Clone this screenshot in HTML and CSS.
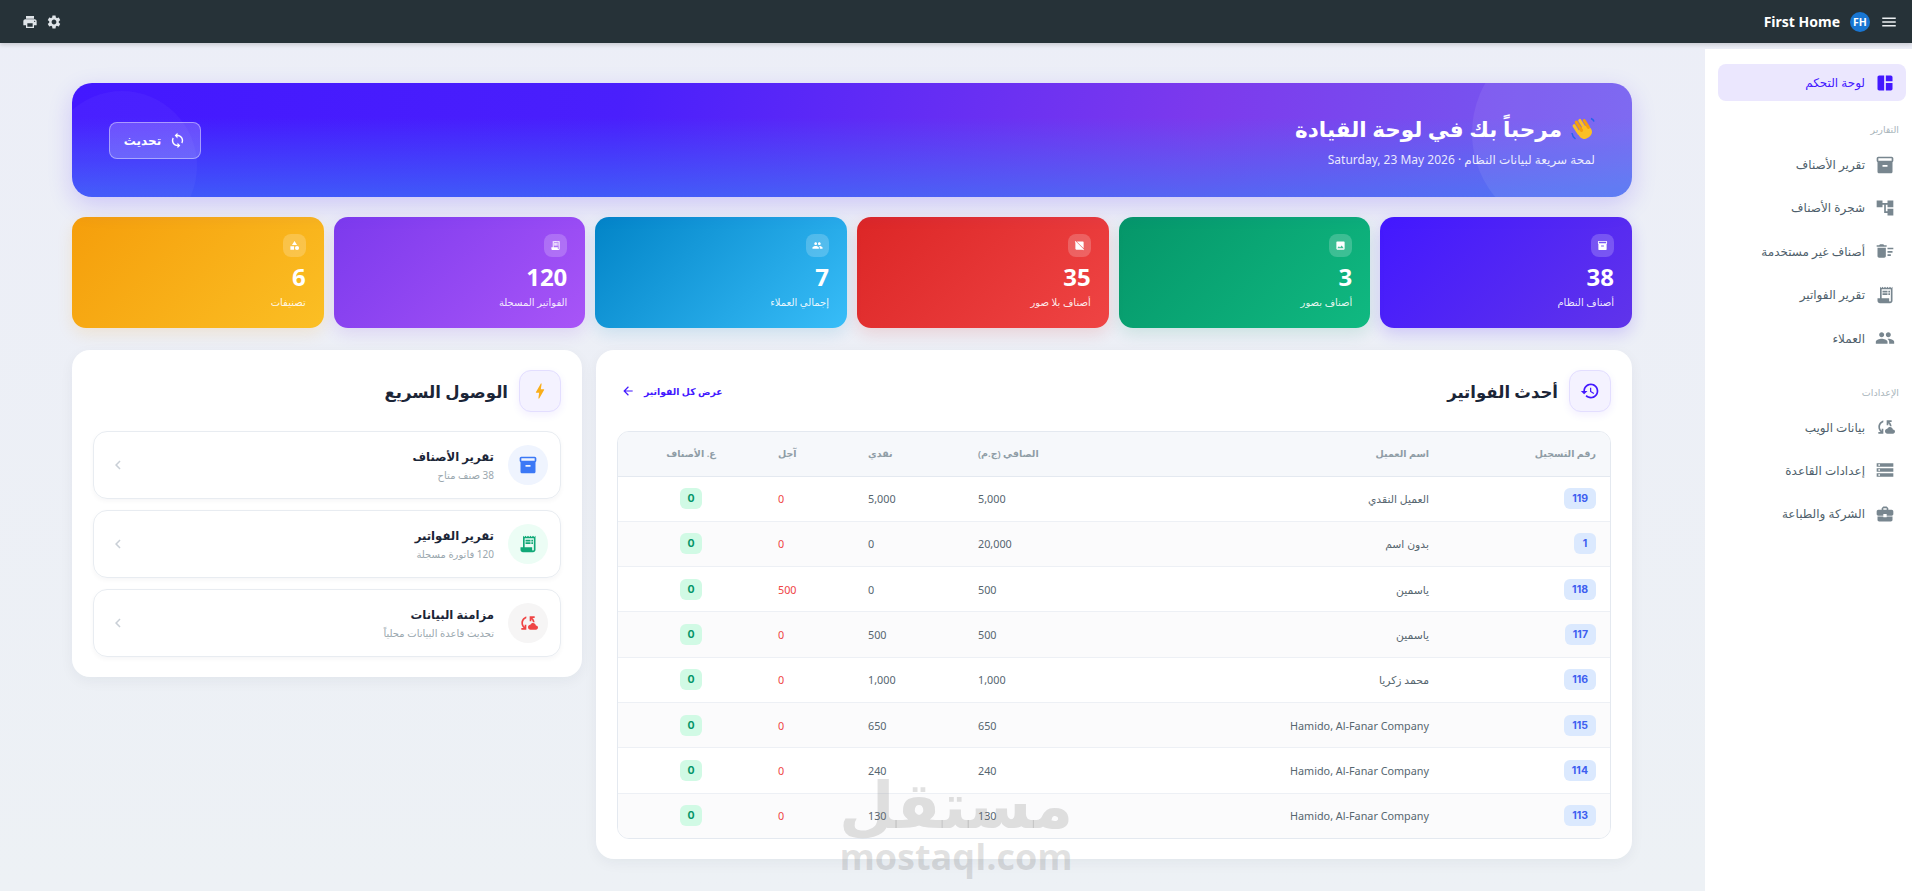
FILE: index.html
```html
<!DOCTYPE html>
<html lang="ar" dir="rtl">
<head>
    <meta charset="UTF-8">
    <meta name="viewport" content="width=device-width, initial-scale=1.0">
    <title>لوحة التحكم</title>
    <link rel="stylesheet" href="styles.css">
</head>
<body>
    <!-- icon set -->
    <svg class="icon-defs" xmlns="http://www.w3.org/2000/svg">
        <symbol id="i-dashboard" viewBox="0 0 24 24"><path d="M11 21H5c-1.1 0-2-.9-2-2V5c0-1.1.9-2 2-2h6v18zm2 0h6c1.1 0 2-.9 2-2v-7h-8v9zm8-11V5c0-1.1-.9-2-2-2h-6v7h8z"/></symbol>
        <symbol id="i-box" viewBox="0 0 24 24"><path d="M20 2H4c-1 0-2 .9-2 2v3.01c0 .72.43 1.34 1 1.69V20c0 1.1 1.1 2 2 2h14c.9 0 2-.9 2-2V8.7c.57-.35 1-.97 1-1.69V4c0-1.1-1-2-2-2zm-5 12H9v-2h6v2zm5-7H4V4l16-.02V7z"/></symbol>
        <symbol id="i-tree" viewBox="0 0 24 24"><path d="M22 11V3h-7v3H9V3H2v8h7V8h2v10h4v3h7v-8h-7v3h-2V8h2v3z"/></symbol>
        <symbol id="i-sweep" viewBox="0 0 24 24"><path d="M15 16h4v2h-4zm0-8h7v2h-7zm0 4h6v2h-6zM3 18c0 1.1.9 2 2 2h6c1.1 0 2-.9 2-2V8H3v10zM14 5h-3l-1-1H6L5 5H2v2h12z"/></symbol>
        <symbol id="i-receipt" viewBox="0 0 24 24"><path d="M19.5 3.5L18 2l-1.5 1.5L15 2l-1.5 1.5L12 2l-1.5 1.5L9 2 7.5 3.5 6 2v14H3v3c0 1.66 1.34 3 3 3h12c1.66 0 3-1.34 3-3V2l-1.5 1.5zM19 19c0 .55-.45 1-1 1s-1-.45-1-1v-3H8V5h11v14zM9 7h6v2H9zm7 0h2v2h-2zM9 10h6v2H9zm7 0h2v2h-2z"/></symbol>
        <symbol id="i-people" viewBox="0 0 24 24"><path d="M16 11c1.66 0 2.99-1.34 2.99-3S17.66 5 16 5c-1.66 0-3 1.34-3 3s1.34 3 3 3zm-8 0c1.66 0 2.99-1.34 2.99-3S9.66 5 8 5C6.34 5 5 6.34 5 8s1.34 3 3 3zm0 2c-2.33 0-7 1.17-7 3.5V19h14v-2.5c0-2.33-4.67-3.5-7-3.5zm8 0c-.29 0-.62.02-.97.05 1.16.84 1.97 1.97 1.97 3.45V19h6v-2.5c0-2.33-4.67-3.5-7-3.5z"/></symbol>
        <symbol id="i-cloud" viewBox="0 0 24 24"><path d="M21.5 14.98c-.02 0-.03 0-.05.01C21.2 13.3 19.76 12 18 12c-1.4 0-2.6.83-3.16 2.02C13.26 14.1 12 15.4 12 17c0 1.66 1.34 3 3 3l6.5-.02c1.38 0 2.5-1.12 2.5-2.5s-1.12-2.5-2.5-2.5zM10 4.26v2.09C7.67 7.18 6 9.39 6 12c0 1.77.78 3.34 2 4.44V14h2v6H4v-2h2.73C5.06 16.54 4 14.4 4 12c0-3.73 2.55-6.85 6-7.74zM20 6h-2.73c1.43 1.26 2.41 3.01 2.66 5h-2.02c-.23-1.36-.93-2.55-1.91-3.44V10h-2V4h6v2z"/></symbol>
        <symbol id="i-storage" viewBox="0 0 24 24"><path d="M2 20h20v-4H2v4zm2-3h2v2H4v-2zM2 4v4h20V4H2zm4 3H4V5h2v2zm-4 7h20v-4H2v4zm2-3h2v2H4v-2z"/></symbol>
        <symbol id="i-case" viewBox="0 0 24 24"><path d="M10 16v-1H3.01L3 19c0 1.11.89 2 2 2h14c1.11 0 2-.89 2-2v-4h-7v1h-4zm10-9h-4.01V5l-2-2h-4l-2 2v2H4c-1.1 0-2 .9-2 2v3c0 1.11.89 2 2 2h6v-2h4v2h6c1.1 0 2-.9 2-2V9c0-1.1-.9-2-2-2zm-6 0h-4V5h4v2z"/></symbol>
        <symbol id="i-menu" viewBox="0 0 24 24"><path d="M3 18h18v-2H3v2zm0-5h18v-2H3v2zm0-7v2h18V6H3z"/></symbol>
        <symbol id="i-print" viewBox="0 0 24 24"><path d="M19 8H5c-1.66 0-3 1.34-3 3v6h4v4h12v-4h4v-6c0-1.66-1.34-3-3-3zm-3 11H8v-5h8v5zm3-7c-.55 0-1-.45-1-1s.45-1 1-1 1 .45 1 1-.45 1-1 1zm-1-9H6v4h12V3z"/></symbol>
        <symbol id="i-gear" viewBox="0 0 24 24"><path d="M19.14 12.94c.04-.3.06-.61.06-.94 0-.32-.02-.64-.07-.94l2.03-1.58c.18-.14.23-.41.12-.61l-1.92-3.32c-.12-.22-.37-.29-.59-.22l-2.39.96c-.5-.38-1.03-.7-1.62-.94l-.36-2.54c-.04-.24-.24-.41-.48-.41h-3.84c-.24 0-.43.17-.47.41l-.36 2.54c-.59.24-1.13.57-1.62.94l-2.39-.96c-.22-.08-.47 0-.59.22L2.74 8.87c-.12.21-.08.47.12.61l2.03 1.58c-.05.3-.09.63-.09.94s.02.64.07.94l-2.03 1.58c-.18.14-.23.41-.12.61l1.92 3.32c.12.22.37.29.59.22l2.39-.96c.5.38 1.03.7 1.62.94l.36 2.54c.05.24.24.41.48.41h3.84c.24 0 .44-.17.47-.41l.36-2.54c.59-.24 1.13-.56 1.62-.94l2.39.96c.22.08.47 0 .59-.22l1.92-3.32c.12-.22.07-.47-.12-.61l-2.01-1.58zM12 15.6c-1.98 0-3.6-1.62-3.6-3.6s1.62-3.6 3.6-3.6 3.6 1.62 3.6 3.6-1.62 3.6-3.6 3.6z"/></symbol>
        <symbol id="i-sync" viewBox="0 0 24 24"><path d="M12 4V1L8 5l4 4V6c3.31 0 6 2.69 6 6 0 1.01-.25 1.97-.7 2.8l1.46 1.46C19.54 15.03 20 13.57 20 12c0-4.42-3.58-8-8-8zm0 14c-3.31 0-6-2.69-6-6 0-1.01.25-1.97.7-2.8L5.24 7.74C4.46 8.97 4 10.43 4 12c0 4.42 3.58 8 8 8v3l4-4-4-4v3z"/></symbol>
        <symbol id="i-image" viewBox="0 0 24 24"><path d="M21 19V5c0-1.1-.9-2-2-2H5c-1.1 0-2 .9-2 2v14c0 1.1.9 2 2 2h14c1.1 0 2-.9 2-2zM8.5 13.5l2.5 3.01L14.5 12l4.5 6H5l3.5-4.5z"/></symbol>
        <symbol id="i-noimage" viewBox="0 0 24 24"><path d="M21 18.15V5c0-1.1-.9-2-2-2H5.85L21 18.15zM20.31 22.14 18.17 21H5c-1.1 0-2-.9-2-2V5.83L1.86 3.69 3.27 2.28l18.45 18.45-1.41 1.41z"/></symbol>
        <symbol id="i-category" viewBox="0 0 24 24"><path d="M12 2l-5.5 9h11zM17.5 13a4.5 4.5 0 1 0 0 9 4.5 4.5 0 0 0 0-9zM3 13.5h8v8H3z"/></symbol>
        <symbol id="i-bolt" viewBox="0 0 24 24"><path d="M11 21h-1l1-7H7.5c-.58 0-.57-.32-.38-.66.19-.34.05-.08.07-.12C8.48 10.94 10.42 7.54 13 3h1l-1 7h3.5c.49 0 .56.33.47.51l-.07.15C12.96 17.55 11 21 11 21z"/></symbol>
        <symbol id="i-history" viewBox="0 0 24 24"><path d="M13 3c-4.97 0-9 4.03-9 9H1l3.89 3.89.07.14L9 12H6c0-3.87 3.13-7 7-7s7 3.13 7 7-3.13 7-7 7c-1.93 0-3.68-.79-4.94-2.06l-1.42 1.42C8.27 19.99 10.51 21 13 21c4.97 0 9-4.03 9-9s-4.03-9-9-9zm-1 5v5l4.28 2.54.72-1.21-3.5-2.08V8H12z"/></symbol>
        <symbol id="i-back" viewBox="0 0 24 24"><path d="M20 11H7.83l5.59-5.59L12 4l-8 8 8 8 1.41-1.41L7.83 13H20v-2z"/></symbol>
        <symbol id="i-chevron" viewBox="0 0 24 24"><path d="M15.41 7.41L14 6l-6 6 6 6 1.41-1.41L10.83 12z"/></symbol>
    </svg>

    <header class="topbar">
        <div class="topbar-brand">
            <button class="icon-btn"><svg class="icon-md"><use href="#i-menu"/></svg></button>
            <span class="avatar">FH</span>
            <span class="brand-name">First Home</span>
        </div>
        <div class="topbar-tools">
            <svg class="icon-tool"><use href="#i-gear"/></svg>
            <svg class="icon-tool"><use href="#i-print"/></svg>
        </div>
    </header>

    <div class="layout">
        <aside class="sidebar">
            <a class="nav-item active"><svg class="nav-icon"><use href="#i-dashboard"/></svg>لوحة التحكم</a>

            <div class="nav-label">التقارير</div>
            <a class="nav-item"><svg class="nav-icon"><use href="#i-box"/></svg>تقرير الأصناف</a>
            <a class="nav-item"><svg class="nav-icon"><use href="#i-tree"/></svg>شجرة الأصناف</a>
            <a class="nav-item"><svg class="nav-icon"><use href="#i-sweep"/></svg>أصناف غير مستخدمة</a>
            <a class="nav-item"><svg class="nav-icon"><use href="#i-receipt"/></svg>تقرير الفواتير</a>
            <a class="nav-item"><svg class="nav-icon"><use href="#i-people"/></svg>العملاء</a>

            <div class="nav-label nav-label-gap">الإعدادات</div>
            <a class="nav-item"><svg class="nav-icon"><use href="#i-cloud"/></svg>بيانات الويب</a>
            <a class="nav-item"><svg class="nav-icon"><use href="#i-storage"/></svg>إعدادات القاعدة</a>
            <a class="nav-item"><svg class="nav-icon"><use href="#i-case"/></svg>الشركة والطباعة</a>
        </aside>

        <main class="main">
            <section class="banner">
                <div class="banner-text">
                    <h1>
                        <svg class="wave" viewBox="0 0 24 24">
                            <g transform="rotate(-32 12 12)">
                                <rect x="5" y="10" width="14" height="12" rx="6" fill="#fbbf24"/>
                                <rect x="4.6" y="3" width="3.2" height="12" rx="1.6" fill="#fbbf24"/>
                                <rect x="8.4" y="1" width="3.2" height="13" rx="1.6" fill="#f59e0b"/>
                                <rect x="12.2" y="1.5" width="3.2" height="13" rx="1.6" fill="#fbbf24"/>
                                <rect x="16" y="4" width="3" height="11" rx="1.5" fill="#f59e0b"/>
                            </g>
                            <path d="M1 16c.3 2.5 1.5 4.5 3.5 6M20 1.5c1.5.5 2.5 1.5 3 3" fill="none" stroke="#2563eb" stroke-width="1.5"/>
                        </svg>
                        مرحباً بك في لوحة القيادة
                    </h1>
                    <p>لمحة سريعة لبيانات النظام · <span class="latin">Saturday, 23 May 2026</span></p>
                </div>
                <button class="refresh-btn"><svg class="icon-sm"><use href="#i-sync"/></svg>تحديث</button>
            </section>

            <section class="stats">
                <div class="stat stat-indigo">
                    <span class="stat-icon"><svg><use href="#i-box"/></svg></span>
                    <strong>38</strong>
                    <span class="stat-label">أصناف النظام</span>
                </div>
                <div class="stat stat-green">
                    <span class="stat-icon"><svg><use href="#i-image"/></svg></span>
                    <strong>3</strong>
                    <span class="stat-label">أصناف بصور</span>
                </div>
                <div class="stat stat-red">
                    <span class="stat-icon"><svg><use href="#i-noimage"/></svg></span>
                    <strong>35</strong>
                    <span class="stat-label">أصناف بلا صور</span>
                </div>
                <div class="stat stat-blue">
                    <span class="stat-icon"><svg><use href="#i-people"/></svg></span>
                    <strong>7</strong>
                    <span class="stat-label">إجمالي العملاء</span>
                </div>
                <div class="stat stat-purple">
                    <span class="stat-icon"><svg><use href="#i-receipt"/></svg></span>
                    <strong>120</strong>
                    <span class="stat-label">الفواتير المسجلة</span>
                </div>
                <div class="stat stat-amber">
                    <span class="stat-icon"><svg><use href="#i-category"/></svg></span>
                    <strong>6</strong>
                    <span class="stat-label">تصنيفات</span>
                </div>
            </section>

            <section class="columns">
                <div class="panel">
                    <div class="panel-head">
                        <div class="panel-title">
                            <span class="panel-icon icon-indigo"><svg><use href="#i-history"/></svg></span>
                            <h2>أحدث الفواتير</h2>
                        </div>
                        <a class="panel-link">عرض كل الفواتير<svg class="icon-xs"><use href="#i-back"/></svg></a>
                    </div>
                    <div class="table-wrap">
                        <table class="invoices">
                            <thead>
                                <tr>
                                    <th class="col-id">رقم التسجيل</th>
                                    <th class="col-name">اسم العميل</th>
                                    <th class="col-net num">الصافي (ج.م)</th>
                                    <th class="col-cash num">نقدي</th>
                                    <th class="col-due num">آجل</th>
                                    <th class="col-items">ع. الأصناف</th>
                                </tr>
                            </thead>
                            <tbody>
                                <tr><td><span class="badge">119</span></td><td>العميل النقدي</td><td class="num">5,000</td><td class="num">5,000</td><td class="num due">0</td><td class="col-items"><span class="badge-green">0</span></td></tr>
                                <tr><td><span class="badge">1</span></td><td>بدون اسم</td><td class="num">20,000</td><td class="num">0</td><td class="num due">0</td><td class="col-items"><span class="badge-green">0</span></td></tr>
                                <tr><td><span class="badge">118</span></td><td>ياسمين</td><td class="num">500</td><td class="num">0</td><td class="num due">500</td><td class="col-items"><span class="badge-green">0</span></td></tr>
                                <tr><td><span class="badge">117</span></td><td>ياسمين</td><td class="num">500</td><td class="num">500</td><td class="num due">0</td><td class="col-items"><span class="badge-green">0</span></td></tr>
                                <tr><td><span class="badge">116</span></td><td>محمد زكريا</td><td class="num">1,000</td><td class="num">1,000</td><td class="num due">0</td><td class="col-items"><span class="badge-green">0</span></td></tr>
                                <tr><td><span class="badge">115</span></td><td>Hamido, Al-Fanar Company</td><td class="num">650</td><td class="num">650</td><td class="num due">0</td><td class="col-items"><span class="badge-green">0</span></td></tr>
                                <tr><td><span class="badge">114</span></td><td>Hamido, Al-Fanar Company</td><td class="num">240</td><td class="num">240</td><td class="num due">0</td><td class="col-items"><span class="badge-green">0</span></td></tr>
                                <tr><td><span class="badge">113</span></td><td>Hamido, Al-Fanar Company</td><td class="num">130</td><td class="num">130</td><td class="num due">0</td><td class="col-items"><span class="badge-green">0</span></td></tr>
                            </tbody>
                        </table>
                    </div>
                </div>

                <div class="panel panel-side">
                    <div class="panel-head">
                        <div class="panel-title">
                            <span class="panel-icon icon-amber"><svg><use href="#i-bolt"/></svg></span>
                            <h2>الوصول السريع</h2>
                        </div>
                    </div>
                    <div class="quick-list">
                        <a class="quick-item">
                            <span class="quick-icon quick-blue"><svg><use href="#i-box"/></svg></span>
                            <span class="quick-text"><b>تقرير الأصناف</b><small>38 صنف متاح</small></span>
                            <svg class="quick-arrow"><use href="#i-chevron"/></svg>
                        </a>
                        <a class="quick-item">
                            <span class="quick-icon quick-green"><svg><use href="#i-receipt"/></svg></span>
                            <span class="quick-text"><b>تقرير الفواتير</b><small>120 فاتورة مسجلة</small></span>
                            <svg class="quick-arrow"><use href="#i-chevron"/></svg>
                        </a>
                        <a class="quick-item">
                            <span class="quick-icon quick-red"><svg><use href="#i-cloud"/></svg></span>
                            <span class="quick-text"><b>مزامنة البيانات</b><small>تحديث قاعدة البيانات محلياً</small></span>
                            <svg class="quick-arrow"><use href="#i-chevron"/></svg>
                        </a>
                    </div>
                </div>
            </section>
        </main>
    </div>

    <div class="watermark">
        <span class="wm-ar">مستقل</span>
        <span class="wm-en">mostaql.com</span>
    </div>
</body>
</html>
```

FILE: styles.css
```css
* {
    box-sizing: border-box;
}
html, body {
    height: 100%;
}
body {
    margin: 0;
    font-family: "Noto Sans", "DejaVu Sans", sans-serif;
    background: linear-gradient(180deg, #eceef7, #edf1f5);
    color: #1b2537;
    overflow: hidden;
}
h1, h2, p {
    margin: 0;
}
svg {
    fill: currentColor;
    display: block;
}
.icon-defs {
    display: none;
}
.icon-md {
    width: 18px;
    height: 18px;
}
.icon-sm {
    width: 17px;
    height: 17px;
}
.icon-xs {
    width: 14px;
    height: 14px;
}
.icon-tool {
    width: 16px;
    height: 16px;
}
.latin {
    direction: ltr;
    unicode-bidi: isolate;
}

/* top bar */
.topbar {
    height: 43px;
    background-color: #263238;
    color: #eceff1;
    display: flex;
    align-items: center;
    justify-content: space-between;
    padding: 0 14px 0 22px;
    box-shadow: 0 2px 4px rgba(0, 0, 0, 0.15);
    position: relative;
}
.topbar-brand {
    display: flex;
    align-items: center;
    gap: 10px;
}
.icon-btn {
    background: none;
    border: none;
    padding: 0;
    color: inherit;
}
.avatar {
    width: 20px;
    height: 20px;
    border-radius: 50%;
    background-color: #1976d2;
    color: #fff;
    font-size: 10.5px;
    font-weight: 700;
    display: flex;
    align-items: center;
    justify-content: center;
}
.brand-name {
    font-size: 14px;
    font-weight: 700;
    color: #fff;
}
.topbar-tools {
    display: flex;
    gap: 8px;
    color: #dfe4e8;
}

/* sidebar */
.layout {
    display: flex;
    height: calc(100% - 43px);
}
.sidebar {
    width: 207px;
    flex-shrink: 0;
    background-color: #fff;
    margin-top: 6px;
    padding: 15px 6px 0 13px;
}
.nav-item {
    display: flex;
    align-items: center;
    gap: 10px;
    height: 37px;
    margin-bottom: 6.4px;
    padding: 0 11px 0 0;
    border-radius: 8px;
    font-size: 12px;
    color: #4f5f6c;
}
.nav-icon {
    width: 20px;
    height: 20px;
    color: #78868f;
}
.nav-item.active {
    background-color: #ebe7fe;
    color: #4318ff;
}
.nav-item.active .nav-icon {
    color: #4318ff;
}
.nav-label {
    font-size: 9.5px;
    color: #a9b5bb;
    padding: 0 7px 0 0;
    margin: 22px 0 10px;
}
.nav-label-gap {
    margin-top: 29px;
}

/* main */
.main {
    flex: 1;
    min-width: 0;
    padding: 40px 73px 0 72px;
}
.banner {
    height: 114px;
    border-radius: 20px;
    padding: 0 37px;
    display: flex;
    align-items: center;
    justify-content: space-between;
    color: #fff;
    position: relative;
    overflow: hidden;
    background:
        linear-gradient(to bottom, rgba(59, 130, 246, 0) 30%, rgba(59, 130, 246, 0.6) 100%),
        linear-gradient(100deg, #4318ff 0%, #4a1ffc 35%, #7c3aed 72%, #7560f0 100%);
    box-shadow: 0 8px 24px rgba(67, 24, 255, 0.18);
}
.banner::before {
    content: "";
    position: absolute;
    width: 200px;
    height: 200px;
    right: -40px;
    top: -50px;
    border-radius: 50%;
    background-color: rgba(255, 255, 255, 0.07);
}
.banner::after {
    content: "";
    position: absolute;
    width: 150px;
    height: 150px;
    left: -25px;
    top: 8px;
    border-radius: 50%;
    background-color: rgba(255, 255, 255, 0.035);
}
.banner-text, .refresh-btn {
    position: relative;
    z-index: 1;
}
.banner h1 {
    display: flex;
    align-items: center;
    gap: 9px;
    font-size: 21.5px;
    font-weight: 700;
    line-height: 32px;
}
.wave {
    width: 24px;
    height: 24px;
}
.banner p {
    font-size: 12px;
    color: rgba(255, 255, 255, 0.88);
    margin-top: 6px;
}
.refresh-btn {
    width: 92px;
    height: 37px;
    display: flex;
    align-items: center;
    justify-content: center;
    gap: 8px;
    background-color: rgba(255, 255, 255, 0.2);
    border: 1px solid rgba(255, 255, 255, 0.42);
    border-radius: 8px;
    color: #fff;
    font-family: inherit;
    font-size: 12px;
    font-weight: 600;
}

/* stat cards */
.stats {
    display: grid;
    grid-template-columns: repeat(6, 1fr);
    gap: 10px;
    margin-top: 20px;
}
.stat {
    height: 111px;
    border-radius: 14px;
    padding: 17px 18px 0;
    color: #fff;
    display: flex;
    flex-direction: column;
    align-items: flex-start;
}
.stat strong {
    font-size: 24px;
    font-weight: 700;
    line-height: 30px;
    margin-top: 5px;
}
.stat-label {
    font-size: 10px;
    line-height: 16px;
    color: rgba(255, 255, 255, 0.9);
    margin-top: 2px;
}
.stat-icon {
    width: 23px;
    height: 23px;
    border-radius: 8px;
    background-color: rgba(255, 255, 255, 0.2);
    display: flex;
    align-items: center;
    justify-content: center;
}
.stat-icon svg {
    width: 11px;
    height: 11px;
}
.stat-indigo {
    background: linear-gradient(135deg, #4318ff, #6034ea);
    box-shadow: 0 6px 16px rgba(67, 24, 255, 0.18);
}
.stat-green {
    background: linear-gradient(135deg, #059669, #10b981);
    box-shadow: 0 6px 16px rgba(5, 150, 105, 0.14);
}
.stat-red {
    background: linear-gradient(135deg, #dc2626, #ef4444);
    box-shadow: 0 6px 16px rgba(220, 38, 38, 0.14);
}
.stat-blue {
    background: linear-gradient(135deg, #0284c7, #38bdf8);
    box-shadow: 0 6px 16px rgba(2, 132, 199, 0.14);
}
.stat-purple {
    background: linear-gradient(135deg, #7c3aed, #a855f7);
    box-shadow: 0 6px 16px rgba(124, 58, 237, 0.14);
}
.stat-amber {
    background: linear-gradient(135deg, #f59e0b, #fbbf24);
    box-shadow: 0 6px 16px rgba(245, 158, 11, 0.14);
}

/* panels */
.columns {
    display: grid;
    grid-template-columns: 1036px 510px;
    gap: 14px;
    align-items: start;
    margin-top: 22px;
}
.panel {
    background-color: #fff;
    border-radius: 18px;
    padding: 20px 21px 20px;
    box-shadow: 0 4px 14px rgba(27, 37, 55, 0.05);
}
.panel-head {
    display: flex;
    align-items: center;
    justify-content: space-between;
    height: 42px;
    margin-bottom: 19px;
}
.panel-title {
    display: flex;
    align-items: center;
    gap: 11px;
}
.panel h2 {
    font-size: 16.5px;
    font-weight: 700;
}
.panel-icon {
    width: 42px;
    height: 42px;
    border-radius: 12px;
    background-color: #f4f2ff;
    border: 1px solid #e3deff;
    box-shadow: 0 3px 8px rgba(67, 24, 255, 0.07);
    display: flex;
    align-items: center;
    justify-content: center;
}
.panel-icon svg {
    width: 20px;
    height: 20px;
}
.icon-indigo {
    color: #4318ff;
}
.icon-amber {
    color: #f9ae1a;
}
.panel-link {
    display: flex;
    align-items: center;
    gap: 9px;
    font-size: 9.3px;
    font-weight: 600;
    color: #4318ff;
    padding-left: 4px;
}

/* invoices table */
.table-wrap {
    border: 1px solid #e4e9f0;
    border-radius: 12px;
    overflow: hidden;
}
.invoices {
    width: 100%;
    border-collapse: collapse;
    table-layout: fixed;
}
.invoices th {
    height: 44px;
    background-color: #f6f8fb;
    border-bottom: 1px solid #e4e9f0;
    font-size: 9.5px;
    font-weight: 600;
    color: #8f9da6;
    text-align: right;
    padding: 0 14px;
}
.invoices td {
    height: 45.3px;
    font-size: 10.8px;
    color: #56666f;
    padding: 0 14px;
    border-bottom: 1px solid #edf0f5;
}
.invoices tr:last-child td {
    border-bottom: none;
}
.invoices tbody tr:nth-child(even) {
    background-color: #fbfbfc;
}
.col-id {
    width: 167px;
}
.col-net {
    width: 130px;
}
.col-cash {
    width: 110px;
}
.col-due {
    width: 90px;
}
.col-items {
    width: 146px;
    text-align: center !important;
}
.invoices .num {
    text-align: left;
}
.invoices .due {
    color: #ef4444;
}
.badge {
    display: inline-block;
    min-width: 22px;
    padding: 4px 8px;
    border-radius: 6px;
    background-color: #dbe9fe;
    color: #3f5ff0;
    font-family: Inter, sans-serif;
    font-size: 10.5px;
    font-weight: 700;
    text-align: center;
}
.badge-green {
    display: inline-block;
    width: 22px;
    padding: 4px 0;
    border-radius: 6px;
    background-color: #d1fae5;
    color: #059669;
    font-family: Inter, sans-serif;
    font-size: 10.5px;
    font-weight: 700;
    text-align: center;
}

/* quick access */
.quick-list {
    display: flex;
    flex-direction: column;
    gap: 11px;
}
.quick-item {
    display: flex;
    align-items: center;
    gap: 14px;
    height: 68px;
    padding: 0 12px;
    border: 1px solid #e8ecf1;
    border-radius: 14px;
    box-shadow: 0 2px 5px rgba(27, 37, 55, 0.04);
}
.quick-icon {
    width: 40px;
    height: 40px;
    border-radius: 50%;
    display: flex;
    align-items: center;
    justify-content: center;
}
.quick-icon svg {
    width: 20px;
    height: 20px;
}
.quick-blue {
    background-color: #eff4fe;
    color: #3b78f6;
}
.quick-green {
    background-color: #ecfdf5;
    color: #10a877;
}
.quick-red {
    background-color: #f6f5f5;
    color: #ef4444;
}
.quick-text {
    flex: 1;
    display: flex;
    flex-direction: column;
    gap: 4px;
}
.quick-text b {
    font-size: 11.7px;
    font-weight: 700;
    color: #1b2537;
}
.quick-text small {
    font-size: 10px;
    color: #9aa7ae;
}
.quick-arrow {
    width: 18px;
    height: 18px;
    color: #c9cfd6;
    margin-left: 3px;
}

/* watermark over the page */
.watermark {
    position: absolute;
    left: 50%;
    bottom: 17px;
    transform: translateX(-50%);
    display: flex;
    flex-direction: column;
    align-items: center;
    color: rgba(120, 120, 120, 0.22);
    pointer-events: none;
}
.wm-ar {
    font-size: 64px;
    font-weight: 700;
    line-height: 72px;
}
.wm-en {
    font-family: "Open Sans", sans-serif;
    font-size: 36px;
    font-weight: 700;
    line-height: 34px;
}
```
